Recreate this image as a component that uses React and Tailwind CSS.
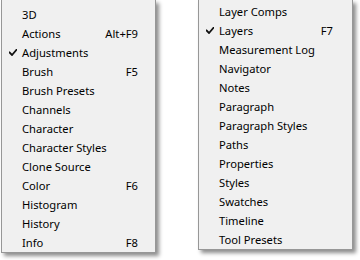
import React from 'react';

const leftItems = [
  { label: '3D' },
  { label: 'Actions', key: 'Alt+F9' },
  { label: 'Adjustments', checked: true },
  { label: 'Brush', key: 'F5' },
  { label: 'Brush Presets' },
  { label: 'Channels' },
  { label: 'Character' },
  { label: 'Character Styles' },
  { label: 'Clone Source' },
  { label: 'Color', key: 'F6' },
  { label: 'Histogram' },
  { label: 'History' },
  { label: 'Info', key: 'F8' },
];

const rightItems = [
  { label: 'Layer Comps' },
  { label: 'Layers', key: 'F7', checked: true },
  { label: 'Measurement Log' },
  { label: 'Navigator' },
  { label: 'Notes' },
  { label: 'Paragraph' },
  { label: 'Paragraph Styles' },
  { label: 'Paths' },
  { label: 'Properties' },
  { label: 'Styles' },
  { label: 'Swatches' },
  { label: 'Timeline' },
  { label: 'Tool Presets' },
];

const Check = () => (
  <svg width="8" height="7" viewBox="0 0 8 7" className="block">
    <path d="M0.5 3.5 L3 6 L7.5 0.8" fill="none" stroke="#111" strokeWidth="1.8" strokeLinecap="square" />
  </svg>
);

const Menu = ({ items, className, keyPad }) => (
  <div className={`w-[155px] bg-[#f0f0f0] border border-t-0 border-[#979797] shadow-[3px_3px_4px_rgba(0,0,0,0.45)] ${className}`}>
    {items.map(item => (
      <div key={item.label} className="h-[19px] flex items-center">
        <div className="w-[20px] pl-[7px] flex items-center">
          {item.checked && <Check />}
        </div>
        <span className="flex-1 whitespace-nowrap">{item.label}</span>
        {item.key && <span className={keyPad}>{item.key}</span>}
      </div>
    ))}
  </div>
);

export default function App() {
  return (
    <div className="w-[360px] h-[260px] bg-white overflow-hidden flex items-start text-[11.2px] text-black leading-none" style={{ fontFamily: '"Noto Sans", "Open Sans", sans-serif' }}>
      <Menu items={leftItems} className="ml-[1px] pt-[5px]" keyPad="pr-[17px]" />
      <Menu items={rightItems} className="ml-[42px] pt-[2px]" keyPad="pr-[19px]" />
    </div>
  );
}
